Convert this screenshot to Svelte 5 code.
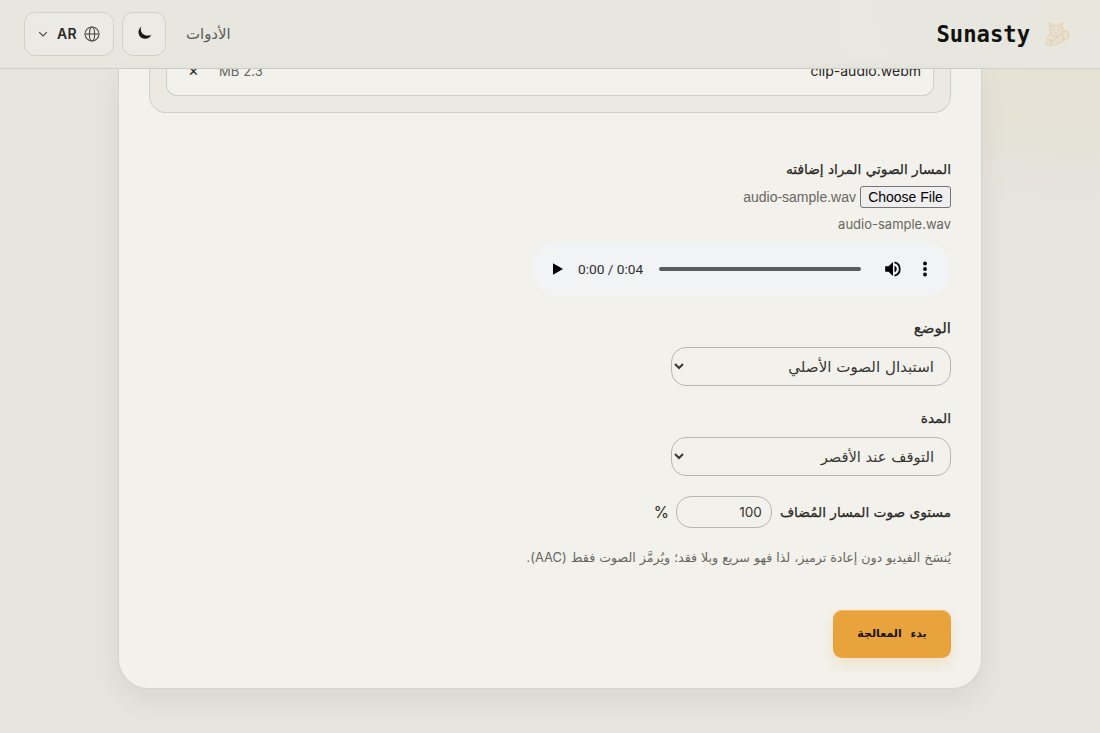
<script>
    let mode = 'replace';
    let duration = 'shortest';
    let volume = '100';
    const filename = 'audio-sample.wav';
</script>

<div class="page" dir="rtl">
    <header>
        <a class="brand" href="#home">
            <svg class="cat" viewBox="0 0 30 30" width="30" height="30">
                <path class="fur" d="M8 12 7.6 3.6l3.8 2.8h5l3.8-2.6.3 7.8 4-.6 3 3 .4 5-3.5 2-4.8 3-9.5 2.2-4-1.5.8-5.6L8.4 14z" />
                <path d="M8 12 7.6 3.6l3.8 2.8h5l3.8-2.6.3 7.8-1.8 4.4-4.6 1.7-4.3-1.4z" />
                <path d="m10.5 10 2 .8m5.2-.8-2 .8m-2.5 2.8.9.8.9-.8M9 6.5l1.2 2m8.8-2-1.2 2" />
                <path d="M8.4 14 5 19.5l-.8 5.6 4 1.5 9.5-2.2 4.6-4-1.8-5M6 20.5l4.6 1.8 5.5-4.8M8 26.2l1.6-3.8" />
                <path d="m20.5 13 3-1.5 2.8 2.3.6 5-3.5 2-3-.6" />
            </svg>
            <span dir="ltr">Sunasty</span>
        </a>
        <nav>
            <a class="tools" href="#tools">الأدوات</a>
            <button class="theme" aria-label="المظهر">
                <svg viewBox="0 0 16 16" width="16" height="16">
                    <path d="M5.2.4C3.6 5 6.6 9.4 11.4 9.6c1.7.1 2.9-.3 3.8-.9-.9 3-4 4.7-7.3 4C2.2 11.6.6 4.4 5.2.4z" />
                </svg>
            </button>
            <button class="lang">
                <svg class="globe" viewBox="0 0 16 16" width="16" height="16">
                    <circle cx="8" cy="8" r="7" />
                    <ellipse cx="8" cy="8" rx="2.6" ry="7" />
                    <path d="M1 8h14" />
                </svg>
                <span>AR</span>
                <svg class="chevron" viewBox="0 0 10 10" width="10" height="10">
                    <path d="m1.2 3.2 3.8 3.7 3.8-3.7" />
                </svg>
            </button>
        </nav>
    </header>

    <main>
        <section class="card">
            <div class="dropzone">
                <div class="file">
                    <span class="clip" dir="ltr">clip-audio.webm</span>
                    <span class="size" dir="ltr">MB 2.3</span>
                    <span class="remove">✕</span>
                </div>
            </div>

            <div class="track">
                <span class="label">المسار الصوتي المراد إضافته</span>
                <div class="picker">
                    <button class="choose">Choose File</button>
                    <span dir="ltr">{filename}</span>
                </div>
                <span class="filename" dir="ltr">{filename}</span>
                <div class="player" dir="ltr">
                    <svg viewBox="0 0 12 14" width="12" height="14">
                        <path d="M1 1.2 11 7 1 12.8z" />
                    </svg>
                    <span class="time">0:00 / 0:04</span>
                    <div class="bar"></div>
                    <svg class="speaker" viewBox="0 0 18 18" width="18" height="18">
                        <path d="M1.2 6.2h3.4L9 2v14l-4.4-4.2H1.2z" />
                        <path d="M10.5 5.4a4 4 0 0 1 0 7.2z" />
                        <path class="wave" d="M10.5 2.3a6.9 6.9 0 0 1 0 13.4" />
                    </svg>
                    <svg class="dots" viewBox="0 0 4 16" width="4" height="16">
                        <circle cx="2" cy="2.5" r="1.9" />
                        <circle cx="2" cy="8" r="1.9" />
                        <circle cx="2" cy="13.5" r="1.9" />
                    </svg>
                </div>
            </div>

            <label class="field">
                <span class="label mode">الوضع</span>
                <select bind:value={mode}>
                    <option value="replace">استبدال الصوت الأصلي</option>
                </select>
            </label>
            <label class="field">
                <span class="label">المدة</span>
                <select class="short" bind:value={duration}>
                    <option value="shortest">التوقف عند الأقصر</option>
                </select>
            </label>

            <div class="volume">
                <span class="label">مستوى صوت المسار المُضاف</span>
                <input inputmode="numeric" dir="ltr" bind:value={volume} />
                <span class="percent">%</span>
            </div>

            <p class="hint">يُنسَخ الفيديو دون إعادة ترميز، لذا فهو سريع وبلا فقد؛ ويُرمَّز الصوت فقط <span>(AAC)</span>.</p>

            <button class="start">بدء المعالجة</button>
        </section>
    </main>
</div>

<style>
    :global(body) {
        margin: 0;
        overflow: hidden;
    }
    .page {
        height: 733px;
        overflow: hidden;
        color: #292824;
        font-family: Inter, 'DejaVu Sans', sans-serif;
        font-size: 14px;
        background:
            radial-gradient(ellipse 300px 200px at 1080px 10px, rgba(232, 212, 155, 0.2), rgba(232, 212, 155, 0.14) 55%, transparent),
            #e5e4df;
    }
    * {
        box-sizing: border-box;
    }
    button {
        font: inherit;
        color: inherit;
        padding: 0;
    }
    header {
        display: flex;
        align-items: center;
        justify-content: space-between;
        height: 69px;
        padding: 0 28px 1px 24px;
        border-bottom: 1px solid #cfcfc9;
        background: rgba(232, 231, 225, 0.85);
    }
    .brand,
    nav {
        display: flex;
        align-items: center;
    }
    a {
        color: inherit;
        text-decoration: none;
    }
    .brand {
        gap: 12px;
        color: #12120e;
        font: bold 22.2px 'DejaVu Sans Mono', monospace;
    }
    .cat {
        fill: none;
        stroke: #e6c186;
        stroke-width: 0.8;
        opacity: 0.8;
    }
    .fur {
        fill: #e6dfd0;
        stroke: none;
    }
    nav {
        gap: 8px;
    }
    .tools {
        margin-left: 12px;
        color: #5b5a54;
        font-size: 14.9px;
    }
    nav button {
        display: flex;
        align-items: center;
        justify-content: center;
        height: 44px;
        border: 1px solid #d1d0ca;
        border-radius: 11px;
        background: #eceae4;
    }
    .theme {
        width: 44px;
        fill: #191914;
    }
    .lang {
        width: 90px;
        gap: 7px;
        font-size: 14px;
        font-weight: 600;
        letter-spacing: 0.4px;
    }
    .globe {
        fill: none;
        stroke: #4d4c46;
        stroke-width: 1.1;
    }
    .chevron {
        margin-right: 2px;
        fill: none;
        stroke: #44433e;
        stroke-width: 1.1;
    }
    main {
        display: flex;
        justify-content: center;
    }
    .card {
        width: 864px;
        height: 620px;
        padding: 0 30px;
        border: 1px solid #d5d4ce;
        border-top: 0;
        border-radius: 0 0 30px 30px;
        background: #f2f1ec;
        box-shadow: 0 10px 26px rgba(50, 48, 35, 0.07);
    }
    .dropzone {
        height: 44px;
        padding: 0 16px;
        border: 1px solid #d0cec8;
        border-top: 0;
        border-radius: 0 0 17px 17px;
        background: #ece9e2;
    }
    .file {
        display: flex;
        height: 27px;
        padding: 0 12px 0 22px;
        border: 1px solid #d0cec8;
        border-top: 0;
        border-radius: 0 0 11px 11px;
        background: #f2f1ec;
        overflow: hidden;
        line-height: 20px;
    }
    .file span {
        margin-top: -8px;
    }
    .clip {
        margin-left: auto;
        font-size: 14px;
    }
    .size {
        color: #65645e;
        font-size: 13px;
        letter-spacing: 0.1px;
    }
    .remove {
        width: 10px;
        margin-right: 20px;
        font-size: 13px;
    }
    .track {
        display: flex;
        flex-direction: column;
        align-items: flex-start;
        padding-top: 46px;
    }
    .label {
        display: block;
        font-family: 'DejaVu Sans', sans-serif;
        font-size: 13.7px;
        line-height: 20px;
        -webkit-text-stroke: 0.25px currentColor;
    }
    .mode {
        font-size: 15px;
    }
    .picker {
        display: flex;
        align-items: center;
        gap: 4px;
        height: 22px;
        margin-top: 7px;
        color: #686760;
        font: 14px 'Liberation Sans', sans-serif;
    }
    .choose {
        width: 91px;
        height: 22px;
        border: 1px solid #767676;
        border-radius: 3px;
        background: #efefef;
        color: #000;
        font-size: 14px;
    }
    .filename {
        margin-top: 6px;
        color: #686760;
        font-size: 13px;
        line-height: 20px;
    }
    .player {
        display: flex;
        align-items: center;
        width: 420px;
        height: 54px;
        margin-top: 8px;
        padding: 0 24px 0 21px;
        border-radius: 27px;
        background: #f1f3f4;
    }
    .time {
        width: 81px;
        margin-left: 14px;
        color: #303030;
        font: 13.7px Roboto, sans-serif;
    }
    .bar {
        width: 202px;
        height: 4px;
        border-radius: 2px;
        background: #5a5a5b;
    }
    .speaker {
        margin-left: 23px;
    }
    .wave {
        fill: none;
        stroke: #000;
        stroke-width: 1.7;
    }
    .dots {
        margin-left: 21px;
    }
    .field {
        display: flex;
        flex-direction: column;
        align-items: flex-start;
        margin-top: 22px;
    }
    select,
    input {
        border: 1px solid #b8b6af;
        background: #f2f1ec;
        color: #383731;
    }
    select {
        width: 280px;
        height: 39px;
        margin-top: 9px;
        padding: 0 12px 0 0;
        border-radius: 15px;
        font: 15.1px 'DejaVu Sans', sans-serif;
    }
    .short {
        font-size: 14.7px;
    }
    .volume {
        display: flex;
        align-items: center;
        height: 32px;
        margin-top: 20px;
    }
    input {
        width: 96px;
        height: 32px;
        margin: 0 8px 0 7px;
        padding: 0 9px 0 12px;
        border-radius: 15px;
        font: 13.6px Inter, sans-serif;
        text-align: right;
    }
    .percent {
        font-size: 15.5px;
    }
    .hint {
        margin: 19px 0 0;
        color: #68675f;
        font: 12.6px/20px 'DejaVu Sans', sans-serif;
        white-space: nowrap;
    }
    .hint span {
        font-family: Inter, sans-serif;
        font-size: 13px;
    }
    .start {
        display: block;
        width: 118px;
        height: 48px;
        margin-top: 42px;
        padding-bottom: 2px;
        border: 0;
        border-radius: 9px;
        background: #e8a33c;
        color: #17140c;
        font: bold 11px 'DejaVu Sans', sans-serif;
        word-spacing: 5px;
        box-shadow:
            inset 0 1px 0 #f1bd6b,
            0 6px 14px rgba(232, 163, 60, 0.2);
    }
    input {
        margin-left: 7px;
        margin-right: 8px;
    }
</style>
